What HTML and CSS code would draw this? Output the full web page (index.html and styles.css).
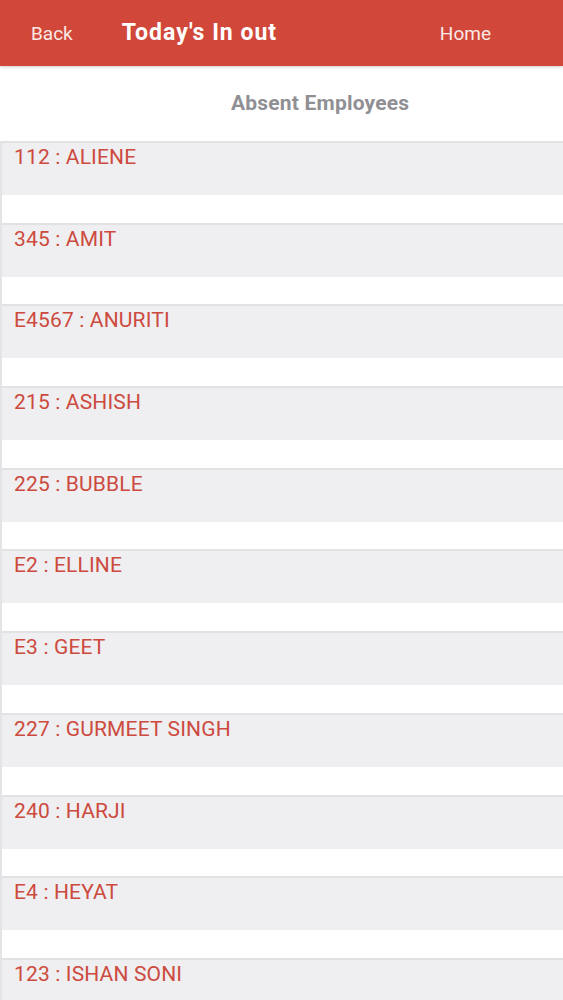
FILE: index.html
```html
<!DOCTYPE html>
<html lang="en">
<head>
    <meta charset="UTF-8">
    <meta name="viewport" content="width=device-width, initial-scale=1.0">
    <title>Today's In out</title>
    <link rel="stylesheet" href="styles.css">
</head>
<body>
    <div class="topbar">
        <a class="nav-link back">Back</a>
        <h1>Today's In out</h1>
        <a class="nav-link home">Home</a>
    </div>
    <div class="section-title">Absent Employees</div>
    <ul class="emp-list">
        <li><div class="emp-name">112 : ALIENE</div></li>
        <li><div class="emp-name">345 : AMIT</div></li>
        <li><div class="emp-name">E4567 : ANURITI</div></li>
        <li><div class="emp-name">215 : ASHISH</div></li>
        <li><div class="emp-name">225 : BUBBLE</div></li>
        <li><div class="emp-name">E2 : ELLINE</div></li>
        <li><div class="emp-name">E3 : GEET</div></li>
        <li><div class="emp-name">227 : GURMEET SINGH</div></li>
        <li><div class="emp-name">240 : HARJI</div></li>
        <li><div class="emp-name">E4 : HEYAT</div></li>
        <li><div class="emp-name">123 : ISHAN SONI</div></li>
    </ul>
</body>
</html>
```

FILE: styles.css
```css
body {
    margin: 0;
    background-color: #ffffff;
    font-family: Roboto, "Liberation Sans", sans-serif;
    overflow: hidden;
}

.topbar {
    display: flex;
    align-items: center;
    height: 66px;
    padding: 0 72px 0 31px;
    background-color: #d1483a;
    box-shadow: 0 1px 3px rgba(0, 0, 0, 0.2);
    position: relative; /* keep the shadow above the content */
    z-index: 1;
}

.nav-link {
    color: #fbe9e6;
    font-size: 19px;
    cursor: pointer;
}

.topbar h1 {
    margin: 0 0 2px 49px;
    font-size: 23px;
    font-weight: bold;
    letter-spacing: 1px;
    color: #ffffff;
}

.home {
    margin-left: auto;
}

.section-title {
    height: 75px;
    line-height: 74px;
    padding-left: 231px;
    font-size: 21px;
    font-weight: bold;
    letter-spacing: 0.2px;
    color: #8f8f94;
}

.emp-list {
    list-style: none;
    margin: 0;
    padding: 0;
    border-left: 2px solid #e4e4e6;
}

.emp-list li {
    height: 79.7px;
    border-top: 2px solid #e2e2e4;
    background-color: #ffffff;
}

.emp-name {
    height: 52px;
    padding: 2px 0 0 12px;
    box-sizing: border-box;
    background-color: #efeef0;
    color: #cc4a3e;
    font-size: 21px;
    line-height: 24px;
    letter-spacing: 0.15px;
}
```
